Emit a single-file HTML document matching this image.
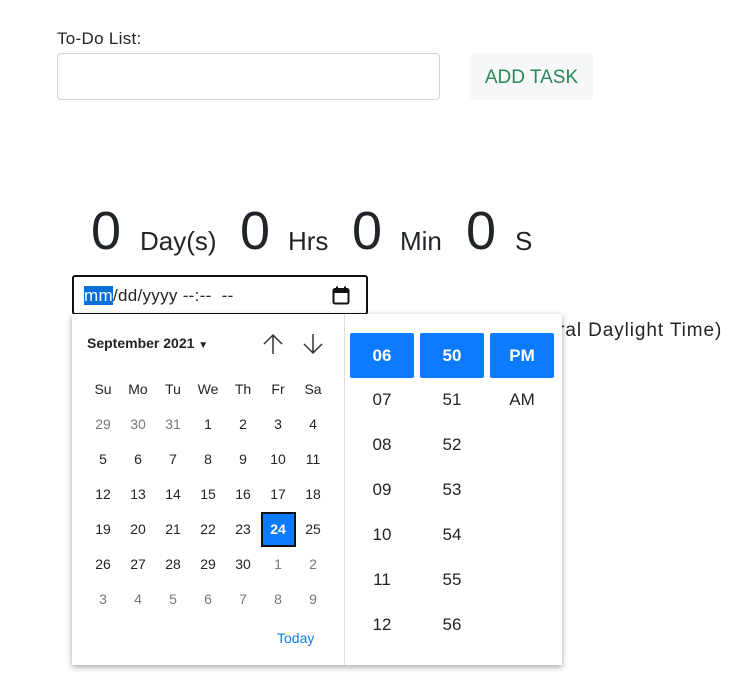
<!DOCTYPE html>
<html><head><style>
body{margin:0;width:756px;height:687px;background:#fff;font-family:"Liberation Sans",sans-serif;color:#212529;position:relative;overflow:hidden}
.a{position:absolute}
.c{position:absolute;width:34px;text-align:center;font-size:14px;transform:translateX(-17px)}
.g{color:#777}
.t{position:absolute;width:64px;text-align:center;font-size:17px;transform:translateX(-32px)}
.b{background:#0d7bff;color:#fff;font-weight:bold;height:45px;line-height:45px;border-radius:2px}
.n{position:absolute;top:200px;font-size:54px}
.l{position:absolute;top:226px;font-size:26px}
</style></head><body>
<div class="a" style="left:57px;top:29px;font-size:17px;letter-spacing:0.3px">To-Do List:</div>
<div class="a" style="left:57px;top:53px;width:381px;height:45px;border:1px solid #ced4da;border-radius:4px"></div>
<div class="a" style="left:470px;top:53px;width:123px;height:47px;background:#f6f7f9;border-radius:4px;color:#2a8a57;font-size:19px;line-height:49px;text-align:center">ADD TASK</div>
<div class="n" style="left:91px">0</div><div class="l" style="left:140px">Day(s)</div>
<div class="n" style="left:240px">0</div><div class="l" style="left:288px">Hrs</div>
<div class="n" style="left:352px">0</div><div class="l" style="left:400px">Min</div>
<div class="n" style="left:466px">0</div><div class="l" style="left:515px">S</div>
<div class="a" style="left:552px;top:320px;font-size:19px;letter-spacing:0.9px">tral Daylight Time)</div>
<div class="a" style="left:72px;top:275px;width:292px;height:36px;border:2px solid #111;border-radius:3px;font-size:17px;line-height:38px;letter-spacing:0.3px"><span style="margin-left:10px;background:#0a6fd6;color:#fff">mm</span>/dd/yyyy --:--&nbsp; --
<svg class="a" style="left:258px;top:9px" width="18" height="19" viewBox="0 0 18 19"><rect x="1.5" y="3" width="15" height="14.5" rx="1.5" fill="none" stroke="#111" stroke-width="2"/><rect x="1.5" y="3" width="15" height="4" fill="#111"/><rect x="4" y="0.5" width="2" height="3" fill="#111"/><rect x="12" y="0.5" width="2" height="3" fill="#111"/></svg></div>
<div class="a" style="left:72px;top:314px;width:490px;height:351px;background:#fff;box-shadow:0 2px 6px rgba(0,0,0,.35)">
<div class="a" style="left:272px;top:0;width:1px;height:351px;background:#ddd"></div>
</div>
<div class="a" style="left:87px;top:335px;font-size:14px;font-weight:bold">September 2021 <span style="font-size:10px">▼</span></div>
<svg class="a" style="left:262px;top:333px" width="22" height="22"><path d="M11 2V21M2 11L11 2L20 11" fill="none" stroke="#333" stroke-width="1.5"/></svg>
<svg class="a" style="left:302px;top:333px" width="22" height="22"><path d="M11 1V20M2 11L11 20L20 11" fill="none" stroke="#333" stroke-width="1.5"/></svg>
<div class="a" style="left:261px;top:512px;width:35px;height:35px;background:#0d7bff;border:2px solid #111;box-sizing:border-box"></div>
<div id="cal"></div>
<div class="a" style="left:277px;top:630px;font-size:14px;color:#0d7bff">Today</div>
<div id="tm"></div>
<script>
var h='',xs=[103,138,173,208,243,278,313];
['Su','Mo','Tu','We','Th','Fr','Sa'].forEach((d,i)=>h+=`<div class="c" style="left:${xs[i]}px;top:381px">${d}</div>`);
var rows=[[29,30,31,1,2,3,4],[5,6,7,8,9,10,11],[12,13,14,15,16,17,18],[19,20,21,22,23,24,25],[26,27,28,29,30,1,2],[3,4,5,6,7,8,9]];
rows.forEach((r,ri)=>r.forEach((d,i)=>{var g=(ri==0&&d>20)||(ri>=4&&d<15);var s=(ri==3&&d==24)?'color:#fff;font-weight:bold;':'';h+=`<div class="c ${g?'g':''}" style="left:${xs[i]}px;top:${416+ri*35}px;${s}">${d}</div>`;}));
document.getElementById('cal').innerHTML=h;
var t='';
[['06','50','PM']].forEach(r=>r.forEach((v,i)=>t+=`<div class="t b" style="left:${382+i*70}px;top:333px">${v}</div>`));
for(var k=0;k<6;k++){t+=`<div class="t" style="left:382px;top:${390+k*45}px">${['07','08','09','10','11','12'][k]}</div><div class="t" style="left:452px;top:${390+k*45}px">${51+k}</div>`;}
t+=`<div class="t" style="left:522px;top:390px">AM</div>`;
document.getElementById('tm').innerHTML=t;
</script>
</body></html>
